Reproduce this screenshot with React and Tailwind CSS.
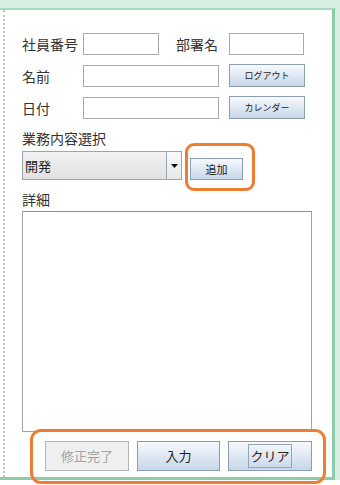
const btn =
  "flex items-center justify-center border border-[#8d9db0] bg-gradient-to-b from-[#f7f9fc] to-[#c7d7ea] text-[#222]";

function Field({ w }) {
  return <div className={`h-[22px] border border-[#a9a9a9] bg-white ${w}`} />;
}

export default function App() {
  return (
    <div className="relative flex h-[485px] w-[340px] flex-col overflow-hidden bg-[#d6eee1] font-['Noto_Sans_CJK_JP','Noto_Sans',sans-serif] text-[#333]">
      <div className="h-[8px] shrink-0" />
      <div className="flex h-[472px]">
        <div className="flex w-[335px] border-b-[3px] border-r-[3px] border-t-2 border-b-[#8dcca9] border-r-[#8dcca9] border-t-[#a8dabd] bg-white">
          <div className="ml-[3px] w-0 border-l-2 border-dotted border-[#c2c2c2]" />
          <div className="flex flex-col pl-[17px] pt-[23px]">
            <div className="flex items-center">
              <span className="w-[61px] text-[14px] leading-[20px]">社員番号</span>
              <Field w="w-[76px]" />
              <span className="ml-[17px] w-[53px] text-[14px] leading-[20px]">部署名</span>
              <Field w="w-[75px]" />
            </div>
            <div className="mt-[9px] flex items-center">
              <span className="w-[61px] text-[14px] leading-[20px]">名前</span>
              <Field w="w-[136px]" />
              <button className={`${btn} ml-[10px] h-[23px] w-[76px] text-[9px]`}>ログアウト</button>
            </div>
            <div className="mt-[9px] flex items-center">
              <span className="w-[61px] text-[14px] leading-[20px]">日付</span>
              <Field w="w-[136px]" />
              <button className={`${btn} ml-[10px] h-[23px] w-[76px] text-[9px]`}>カレンダー</button>
            </div>
            <span className="mt-[9px] text-[14px] leading-[20px]">業務内容選択</span>
            <div className="mt-[3px] flex items-end">
              <div className="flex h-[29px] w-[160px] border border-[#9aa6b2] bg-gradient-to-b from-[#f2f2f2] to-[#e2e2e2]">
                <span className="flex-1 pl-[2px] text-[13px] leading-[27px] text-[#222]">開発</span>
                <div className="flex w-[15px] items-center justify-center border-l border-[#9aa6b2] bg-gradient-to-b from-[#fafafa] to-[#e8e8e8]">
                  <svg width="7" height="4" viewBox="0 0 7 4">
                    <path d="M0 0h7L3.5 4z" fill="#111" />
                  </svg>
                </div>
              </div>
              <button className={`${btn} ml-[8px] h-[22px] w-[53px] text-[11px]`}>追加</button>
            </div>
            <span className="mt-[9px] text-[14px] leading-[20px]">詳細</span>
            <div className="mt-[2px] h-[221px] w-[290px] border border-[#a3a3a3] border-t-[#8f8f8f] bg-white" />
            <div className="mt-[9px] flex gap-[8px] pl-[23px]">
              <button className="flex h-[30px] w-[84px] items-center justify-center border border-[#b4b4b4] bg-[#efefef] text-[13px] text-[#a3a3a3]">
                修正完了
              </button>
              <button className={`${btn} h-[30px] w-[83px] text-[13px]`}>入力</button>
              <button className={`${btn} h-[30px] w-[84px] text-[13px]`}>
                <span className="border border-[#9aa4b0] px-[1px] leading-[22px]">クリア</span>
              </button>
            </div>
          </div>
        </div>
      </div>
      <div className="h-[5px] shrink-0 bg-white" />

      <div className="absolute left-[185px] top-[143px] h-[48px] w-[70px] rounded-[9px] border-[3px] border-[#ed7d31]" />
      <div className="absolute left-[30px] top-[429px] h-[55px] w-[296px] rounded-[11px] border-[3px] border-[#ed7d31]" />
    </div>
  );
}
